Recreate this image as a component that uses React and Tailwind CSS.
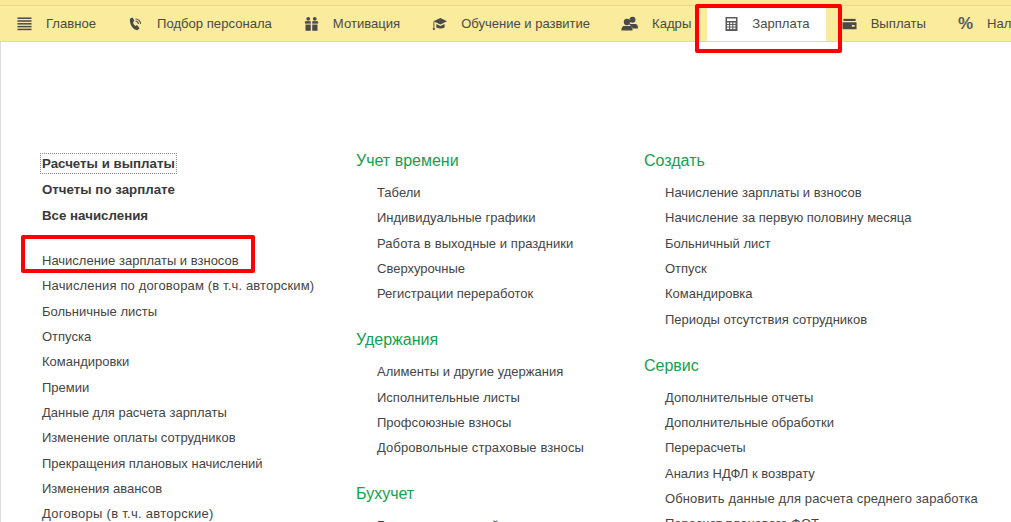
import React from "react";

const I = ({ children, w = 15 }) => (
  <svg width={w} height="16" viewBox="0 0 16 16" fill="#4a4a48" className="shrink-0">{children}</svg>
);

const Menu = () => (
  <I><rect x="0.5" y="1" width="15" height="1.6" /><rect x="0.5" y="4" width="15" height="1.6" /><rect x="0.5" y="7" width="15" height="1.6" /><rect x="0.5" y="10" width="15" height="1.6" /><rect x="0.5" y="13" width="15" height="1.6" /></I>
);
const Phone = () => (
  <I>
    <path d="M2.2 2.2 L5 1 L6.8 4.6 L5.4 6 C5.6 7.6 6.6 9.2 8 10.1 L9.6 9 L12.3 12.4 L10 14.6 C5.4 14.8 1 8 2.2 2.2 Z" />
    <path d="M8 2.6 A5.4 5.4 0 0 1 13.4 8" fill="none" stroke="#4a4a48" strokeWidth="1.1" />
    <path d="M8 5 A3 3 0 0 1 11 8" fill="none" stroke="#4a4a48" strokeWidth="1.1" />
  </I>
);
const Gift = () => (
  <I>
    <circle cx="4.5" cy="2.4" r="2" /><circle cx="11.5" cy="2.4" r="2" />
    <rect x="1" y="5" width="6.2" height="2.6" /><rect x="8.8" y="5" width="6.2" height="2.6" />
    <rect x="1.6" y="8.6" width="5.6" height="6.6" /><rect x="8.8" y="8.6" width="5.6" height="6.6" />
  </I>
);
const Cap = () => (
  <I>
    <path d="M1.5 5 L9 1.6 L16 5 L9 8.4 Z" />
    <path d="M4.6 8 L9 10 L13.4 8 V11.6 C11 13.2 7 13.2 4.6 11.6 Z" />
    <path d="M2 5.4 V12" stroke="#4a4a48" strokeWidth="1" />
    <circle cx="2" cy="13.2" r="1.2" />
  </I>
);
const Users = () => (
  <svg width="17" height="16" viewBox="0 0 17 16" fill="#4a4a48" className="-ml-px shrink-0">
    <circle cx="11.5" cy="3.8" r="3" />
    <path d="M8 8 H15 C16.4 8.6 17 10.2 17 12.4 H12 Z" />
    <circle cx="6" cy="6" r="3.2" />
    <path d="M2.4 10 H9.6 C11 10.8 11.6 12.4 11.6 14.6 H0.4 C0.4 12.4 1 10.8 2.4 10 Z" />
  </svg>
);
const Calc = () => (
  <svg width="13" height="16" viewBox="0 0 13 16" className="shrink-0">
    <rect x="0.5" y="1" width="12" height="14" fill="#5a5a5a" />
    <rect x="2" y="2.5" width="9" height="2.5" fill="#fff" />
    {[6.5, 9, 11.5].map((y) => [2, 5.2, 8.4].map((x) => <rect key={x + "-" + y} x={x} y={y} width="2" height="1.6" fill="#fff" />))}
  </svg>
);
const Card = () => (
  <I>
    <path d="M1.5 2.5 H14.5 V4.8 H1.5 Z" />
    <path d="M0.5 6.2 H15.5 V13.5 H0.5 Z M10.5 9 V10.8 H13.5 V9 Z" fillRule="evenodd" />
  </I>
);

const Tab = ({ icon, label, active, className = "" }) => (
  <div className={`flex h-full shrink-0 items-center gap-[14px] px-4 ${active ? "bg-white" : ""}`}>
    {icon}
    <span className={`whitespace-nowrap ${className}`}>{label}</span>
  </div>
);

const tracking = {
  "Начисления по договорам (в т.ч. авторским)": "tracking-[0.15px]",
  "Договоры (в т.ч. авторские)": "tracking-[0.28px]",
  "Обновить данные для расчета среднего заработка": "tracking-[0.11px]",
  "Работа в выходные и праздники": "tracking-[0.07px]",
  "Добровольные страховые взносы": "tracking-[0.1px]",
};

const Item = ({ children }) => (
  <div className={`h-[25.35px] whitespace-nowrap leading-[25.35px] ${tracking[children] || ""}`}>{children}</div>
);

const Group = ({ title, items, className = "" }) => (
  <section className={className}>
    <h2 className="h-[18px] text-[16px] leading-[18px] text-[#12a150]">{title}</h2>
    <div className="mt-[10px] pl-[21px]">
      {items.map((t) => <Item key={t}>{t}</Item>)}
    </div>
  </section>
);

export default function App() {
  return (
    <div className="relative h-[522px] w-[1011px] overflow-hidden bg-white font-['Liberation_Sans',Arial,sans-serif] text-[13px] text-[#454545]">
      <header className="h-[42px] border-b border-[#d6d6d2] bg-[#fbeb9d]">
        <div className="h-[6px] border-b border-[#e8d884] bg-[#fbe99a]" />
        <nav className="flex h-[35px] items-center pl-px text-[13.1px] text-[#4a4a48]">
          <Tab icon={<Menu />} label="Главное" />
          <Tab icon={<Phone />} label="Подбор персонала" />
          <Tab icon={<Gift />} label="Мотивация" />
          <Tab icon={<Cap />} label="Обучение и развитие" className="text-[13px]" />
          <Tab icon={<Users />} label="Кадры" />
          <Tab icon={<span className="ml-0.5"><Calc /></span>} label="Зарплата" active />
          <Tab icon={<Card />} label="Выплаты" />
          <Tab icon={<span className="w-[15px] text-[17px] font-bold leading-none text-[#5a5a5a]">%</span>} label="Налоги и взносы" />
        </nav>
      </header>

      <main className="flex border-l border-[#dcdcdc] pl-[41px] pt-[110px]">
        <div className="w-[314px] shrink-0">
          <div className="-ml-0.5 mt-[1px] flex h-[21px] w-fit items-center border border-dotted border-[#8a8a8a] px-px text-[13.3px] font-bold text-[#3a3a3a]">Расчеты и выплаты</div>
          <div className="mt-[3px] h-[26px] text-[13.3px] font-bold leading-[26px] text-[#3a3a3a]">Отчеты по зарплате</div>
          <div className="h-[26px] text-[13.3px] font-bold leading-[26px] text-[#3a3a3a]">Все начисления</div>
          <div className="mt-[19px]">
            {["Начисление зарплаты и взносов","Начисления по договорам (в т.ч. авторским)","Больничные листы","Отпуска","Командировки","Премии","Данные для расчета зарплаты","Изменение оплаты сотрудников","Прекращения плановых начислений","Изменения авансов","Договоры (в т.ч. авторские)"].map((t) => <Item key={t}>{t}</Item>)}
          </div>
        </div>
        <div className="w-[288px] shrink-0">
          <Group title="Учет времени" items={["Табели","Индивидуальные графики","Работа в выходные и праздники","Сверхурочные","Регистрации переработок"]} />
          <Group className="mt-[24.5px]" title="Удержания" items={["Алименты и другие удержания","Исполнительные листы","Профсоюзные взносы","Добровольные страховые взносы"]} />
          <Group className="mt-[24.5px]" title="Бухучет" items={["Бухучет начислений сотрудников"]} />
        </div>
        <div className="shrink-0">
          <Group title="Создать" items={["Начисление зарплаты и взносов","Начисление за первую половину месяца","Больничный лист","Отпуск","Командировка","Периоды отсутствия сотрудников"]} />
          <Group className="mt-[24.5px]" title="Сервис" items={["Дополнительные отчеты","Дополнительные обработки","Перерасчеты","Анализ НДФЛ к возврату","Обновить данные для расчета среднего заработка","Пересчет планового ФОТ"]} />
        </div>
      </main>

      <div className="absolute left-[695px] top-[4px] h-[49px] w-[147px] rounded-[2px] border-4 border-[#ff0000]" />
      <div className="absolute left-[21px] top-[235px] h-[38px] w-[234px] rounded-[2px] border-4 border-[#ff0000]" />
    </div>
  );
}
